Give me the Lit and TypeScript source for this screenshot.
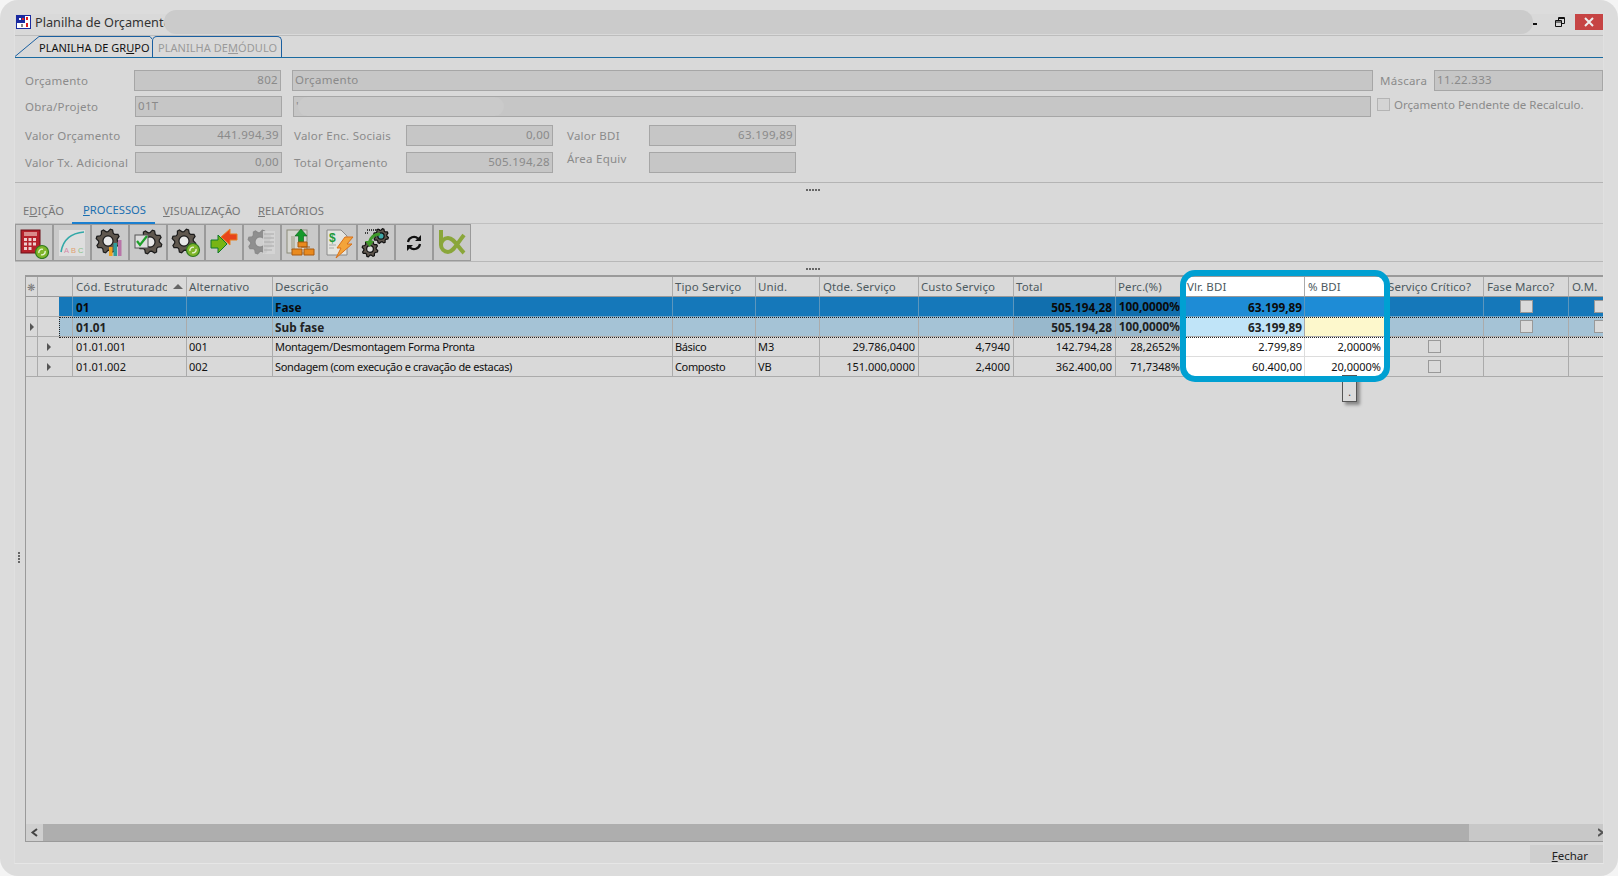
import { LitElement, html, css, svg } from "lit";
import { customElement } from "lit/decorators.js";

const gear = (cx: number, cy: number, r: number, fill = "#5f574e", stroke = "#1a1a1a", hole = "#e8e8e8") => {
  const pts: string[] = [];
  const teeth = 8;
  for (let i = 0; i < teeth * 4; i++) {
    const a = (i / (teeth * 4)) * Math.PI * 2 + 0.2;
    const rad = i % 4 < 2 ? r : r * 0.78;
    pts.push(`${(cx + Math.cos(a) * rad).toFixed(1)},${(cy + Math.sin(a) * rad).toFixed(1)}`);
  }
  return svg`<polygon points=${pts.join(" ")} fill=${fill} stroke=${stroke} stroke-width="1.2"/><circle cx=${cx} cy=${cy} r=${r * 0.42} fill=${hole} stroke=${stroke} stroke-width="1.2"/>`;
};
const badge = (cx: number, cy: number) => svg`<circle cx=${cx} cy=${cy} r="6.5" fill="#7fb52a" stroke="#2f7a1e" stroke-width="1.2"/><path d=${`M${cx - 3} ${cy + 1}a3 3 0 0 1 4-3.6M${cx + 3} ${cy - 1}a3 3 0 0 1-4 3.6`} fill="none" stroke="#e9f5d5" stroke-width="1.4"/>`;

const icons = [
  svg`<rect x="3" y="3" width="19" height="23" fill="#b5212b" stroke="#6d1118"/><rect x="6" y="5" width="13" height="4" fill="#d98b8b"/><path d="M6 11h3v3H6zM10.500 11h3v3h-3zM15 11h3v3h-3zM6 15.500h3v3H6zM10.500 15.500h3v3h-3zM15 15.500h3v3h-3zM6 20h3v3H6zM10.500 20h3v3h-3z" fill="#eecfcf"/>${badge(24, 25)}`,
  svg`<rect x="3" y="3" width="26" height="26" fill="#dedede"/><path d="M5 25C7 13 15 6 28 5" fill="none" stroke="#32a8a8" stroke-width="1.6"/><text x="8" y="26" font-size="7.500" fill="#d58aa8" font-family="Liberation Sans">A</text><text x="15" y="26" font-size="7.500" fill="#e0a070" font-family="Liberation Sans">B</text><text x="22" y="26" font-size="7.500" fill="#88c088" font-family="Liberation Sans">C</text>`,
  svg`${gear(14, 14, 12)}<rect x="15" y="20" width="3.500" height="9" fill="#eda21f"/><rect x="19.500" y="16" width="3.500" height="13" fill="#2f9d9d"/><rect x="24" y="13" width="3.500" height="16" fill="#b874a8"/>`,
  svg`${gear(18, 15, 12)}<rect x="3" y="8" width="13" height="13" fill="#ddd" stroke="#555"/><path d="M5 14l3 4 7-9" fill="none" stroke="#1fa02a" stroke-width="2.200"/>`,
  svg`${gear(14, 14, 12)}${badge(23, 23)}`,
  svg`<path d="M3 13h7V8l9 9-9 9v-5H3z" fill="#78b414" stroke="#0f7a2a"/><path d="M29 6h-7V1l-9 8 9 8v-5h7z" transform="translate(0 1)" fill="#e8431a" stroke="#e88020"/>`,
  svg`${gear(14, 15, 12, "#8f8f8f", "#8a8a8a", "#cfcfcf")}<rect x="17" y="4" width="12" height="23" fill="#d6d6d6" opacity=".85"/><path d="M18 7h10M18 11h10M18 15h10M18 19h10M18 23h8" stroke="#aaa"/>`,
  svg`<rect x="3" y="3" width="20" height="23" fill="#d6d6d0" stroke="#8a8a78"/><path d="M7 9h4v14H7z" fill="#b8b8a8"/><path d="M17 2l6 7h-3.500v6h-5V9H11z" fill="#169a2a" stroke="#0a5a1a" stroke-width=".6"/><path d="M14 20h9v-5h-9zM8 28h10v-6H8zM20 28h10v-6H20zM17 20h9" fill="#e98a1e" stroke="#a85a10"/>`,
  svg`<path d="M5 3h14l6 6v19H5z" fill="#e4e4e0" stroke="#8a8a8a"/><text x="7" y="15" font-size="12" font-weight="700" fill="#1f9a3a" font-family="Liberation Sans">$</text><path d="M7 18h7M7 21h5" stroke="#aaa"/><path d="M23 10h8l-6 7h5L14 31l5-10h-4z" fill="#f4a43a" stroke="#d8701a"/>`,
  svg`<path d="M7 3h18M5 6h3" stroke="#111" stroke-dasharray="1 1" stroke-width="1.500"/>${gear(21, 9, 7.500, "#5f574e", "#111", "#3fa8a8")}${gear(10, 22, 8, "#5f574e", "#111", "#ddd")}<path d="M9 16C11 9 15 7 20 7" fill="none" stroke="#3f9a2a" stroke-width="3"/><path d="M5 14h9l-4.500 6z" fill="#3f9a2a"/>`,
  svg`<path d="M10 15a6 6 0 0 1 10-3.500M22 17a6 6 0 0 1-10 3.500" fill="none" stroke="#111" stroke-width="2.200"/><path d="M23 8v6h-6zM9 24v-6h6z" fill="#111"/>`,
  svg`<path d="M5 3v15a7 7 0 0 0 7 7c5 0 8-7 16-17M5 18a7 7 0 0 1 7-7c6 0 9 8 16 15" fill="none" stroke="#8aa63a" stroke-width="4"/>`,
];

const cols = ["mark", "ind", "cod", "alt", "desc", "tipo", "unid", "qtde", "custo", "total", "perc", "vlr", "pct", "crit", "fase", "om"];
const heads: Record<string, string> = {
  cod: "Cód. Estruturado", alt: "Alternativo", desc: "Descrição", tipo: "Tipo Serviço", unid: "Unid.", qtde: "Qtde. Serviço",
  custo: "Custo Serviço", total: "Total", perc: "Perc.(%)", vlr: "Vlr. BDI", pct: "% BDI", crit: "Serviço Crítico?", fase: "Fase Marco?", om: "O.M.",
};
const right = new Set(["qtde", "custo", "total", "perc", "vlr", "pct"]);
type Row = { kind: string; values: Record<string, string> };
const rows: Row[] = [
  { kind: "phase", values: { cod: "01", desc: "Fase", total: "505.194,28", perc: "100,0000%", vlr: "63.199,89", fase: "x", om: "x" } },
  { kind: "sub", values: { mark: ">", cod: "01.01", desc: "Sub fase", total: "505.194,28", perc: "100,0000%", vlr: "63.199,89", fase: "x", om: "x" } },
  { kind: "item", values: { ind: ">", cod: "01.01.001", alt: "001", desc: "Montagem/Desmontagem Forma Pronta", tipo: "Básico", unid: "M3", qtde: "29.786,0400", custo: "4,7940", total: "142.794,28", perc: "28,2652%", vlr: "2.799,89", pct: "2,0000%", crit: "x" } },
  { kind: "item", values: { ind: ">", cod: "01.01.002", alt: "002", desc: "Sondagem (com execução e cravação de estacas)", tipo: "Composto", unid: "VB", qtde: "151.000,0000", custo: "2,4000", total: "362.400,00", perc: "71,7348%", vlr: "60.400,00", pct: "20,0000%", crit: "x" } },
];

@customElement("app-root")
export class AppRoot extends LitElement {
  static styles = css`
    :host { display: block; width: 1618px; height: 876px; background: #f4f4f4; font-family: "Noto Sans", sans-serif; overflow: hidden; }
    * { box-sizing: border-box; }
    .frame { position: relative; width: 1618px; height: 876px; background: #dcdcdc; border-radius: 18px; padding: 14px 12px 12px 15px; }
    .win { width: 1590px; height: 850px; background: #d9d9d9; border-left: 1px solid #e0e0e0; border-right: 1px solid #e0e0e0; border-bottom: 1px solid #e6e6e6; display: flex; flex-direction: column; margin-left: -1px; }
    .title { height: 22px; border-bottom: 1px solid #bdbdbd; display: flex; align-items: center; padding-left: 1px; flex: none; position: relative; }
    .title .ti { width: 15px; height: 14px; margin: 0 4px 5px 0; flex: none; }
    .title span { font-size: 12.700px; color: #333; margin-bottom: 5px; }
    .ctrls { margin-left: auto; display: flex; align-items: flex-start; height: 21px; }
    .ctrls svg { display: block; }
    .close { width: 28px; height: 16px; background: #c64444; display: flex; align-items: center; justify-content: center; }
    .pill { position: absolute; left: 149px; top: -4px; width: 1369px; height: 24px; border-radius: 12px; background: #cbcbcb; }
    .tabs { height: 22px; border-bottom: 1px solid #1a6aa0; display: flex; flex: none; }
    .tab { position: relative; height: 21px; font-size: 11px; display: flex; align-items: center; white-space: nowrap; padding-top: 1px; }
    .tab svg { position: absolute; left: 0; top: 0; }
    .t1 { width: 137px; padding-left: 24px; color: #111; }
    .t2 { width: 130px; padding-left: 5px; color: #9a9a9a; border: 1px solid #1a5fa0; border-bottom: none; border-radius: 5px 5px 0 0; letter-spacing: .05px; }
    .form { flex: none; height: 125px; padding: 12px 0 0 10px; border-bottom: 1px solid #b4b4b4; display: flex; flex-direction: column; }
    .row { display: flex; height: 21px; align-items: center; flex: none; }
    .r1 { margin-bottom: 5px; }
    .r2 { margin-bottom: 8px; }
    .r3 { margin-bottom: 6px; }
    .lab { font-size: 11.500px; color: #8b8b8b; white-space: nowrap; flex: none; letter-spacing: .25px; padding-bottom: 1px; }
    .row:last-child .lab { padding-bottom: 0; }
    .row:last-child .lab.up { padding-bottom: 9px; }
    .lab.plain { letter-spacing: 0; padding-bottom: 4px; }
    .f { height: 21px; background: #c6c6c6; border: 1px solid #a6a6a6; font-size: 11.500px; color: #8a8a8a; padding: 0 2px 2px; display: flex; align-items: center; white-space: nowrap; flex: none; position: relative; letter-spacing: .3px; }
    .f.num { justify-content: flex-end; }
    .w147 { width: 147px; }
    .cb { width: 13px; height: 13px; border: 1px solid #b4b4b4; background: #d4d4d4; flex: none; margin: 0 0 4px 6px; }
    .blur { position: absolute; left: 4px; top: 0; width: 206px; height: 19px; background: #cacaca; border-radius: 10px; }
    .split { height: 13px; flex: none; display: flex; justify-content: center; align-items: center; font-size: 0; }
    .dots { display: flex; gap: 1px; margin-left: 7px; }
    .dots i { width: 2px; height: 2px; background: #666; }
    .ptabs { height: 28px; flex: none; display: flex; border-bottom: 1px solid #c0c0c0; }
    .pt { font-size: 11.200px; color: #777; display: flex; align-items: center; white-space: nowrap; padding-top: 1px; }
    .pt.on { color: #1a6fb0; border-bottom: 2px solid #1a7fd0; padding: 0 0 0 11px; width: 83px; margin: 0 8px 0 -3px; height: 28px; }
    .tb { display: flex; height: 38px; flex: none; border-bottom: 1px solid #b8b8b8; }
    .btn { width: 38px; height: 37px; background: #c9c9c9; border: 1px solid #9a9a9a; display: flex; align-items: center; justify-content: center; }
    .gridbox { flex: none; height: 567px; margin-left: 10px; border-left: 1px solid #9a9a9a; border-top: 2px solid #9a9a9a; border-bottom: 1px solid #9a9a9a; display: flex; flex-direction: column; overflow: hidden; position: relative; }
    .tw { flex: 1; overflow: hidden; position: relative; }
    .grid { display: grid; grid-template-columns: 12px 35px 114px 86px 400px 83px 64px 99px 95px 102px 68px 121px 80px 99px 85px 64px; grid-auto-rows: 20px; width: 1607px; font-size: 11px; color: #111; }
    .c { border-right: 1px solid #ababab; border-bottom: 1px solid #ababab; padding: 0 3px; display: flex; align-items: center; white-space: nowrap; overflow: hidden; position: relative; }
    .c.right { justify-content: flex-end; }
    .c.h { color: #4d5a60; font-size: 11.500px; letter-spacing: .1px; border-bottom-color: #9a9a9a; }
    .c.h.total, .c.h.perc, .c.h.custo { padding-left: 2px; }
    .c.h.vlr, .c.h.pct { background: #fff; }
    .c.phase, .c.sub { font-size: 11.800px; font-weight: 700; }
    .c.vlr { padding-right: 2px; }
    .c.phase { background: #1578ba; border-bottom-color: #6aa0c4; border-right-color: #5c96bd; color: #0a0a0a; }
    .c.phase.total, .c.phase.perc { background: #116fae; }
    .c.phase.vlr, .c.phase.pct { background: #1e8cd6; }
    .c.sub { background: #a5c3d6; color: #222; }
    .c.sub.total, .c.sub.perc { background: #98b8cc; }
    .c.sub.vlr { background: #c0e4f8; }
    .c.sub.pct { background: #fdf8cc; }
    .c.item.vlr, .c.item.pct { background: #fff; border-color: #ddd; }
    .c.mark.phase, .c.mark.sub { background: #d9d9d9; border-bottom-color: #ababab; border-right-color: #ababab; }
    .c.ind.phase { background: linear-gradient(to right, #d9d9d9 21px, #1578ba 21px); border-bottom-color: #ababab; }
    .c.ind.sub { background: linear-gradient(to right, #d9d9d9 21px, #a5c3d6 21px); }
    .c.mark { padding: 0; justify-content: center; }
    .c.ind { padding: 0 0 0 9px; }
    .c.perc.phase, .c.perc.sub { padding-bottom: 2px; padding-left: 0; }
    .c.desc, .c.tipo, .c.unid, .c.alt { padding-left: 2px; }
    .c.item.desc, .c.item.tipo { letter-spacing: -.35px; }
    .arrow { width: 0; height: 0; border-left: 4px solid #555; border-top: 4px solid transparent; border-bottom: 4px solid transparent; }
    .ck { width: 13px; height: 13px; border: 1px solid #999; background: #dadada; margin: 0 auto; flex: none; }
    .clip { overflow: hidden; width: 91px; flex: none; }
    .sort { margin-left: 6px; width: 0; height: 0; border-left: 5px solid transparent; border-right: 5px solid transparent; border-bottom: 5px solid #666; flex: none; }
    .star { color: #777; font-size: 10px; }
    .focus { position: absolute; left: 33px; top: 40px; width: 1600px; height: 21px; border-top: 1px dotted #222; border-bottom: 1px dotted #222; border-left: 1px dotted #222; pointer-events: none; }
    .sb { height: 17px; display: flex; flex: none; background: #c8c8c8; }
    .sb .a { width: 17px; display: flex; align-items: center; justify-content: center; background: #cfcfcf; }
    .sb .th { width: 1426px; background: #aeaeae; }
    .sb .e { margin-left: auto; width: 5px; display: flex; align-items: center; overflow: hidden; }
    .foot { flex: 1; display: flex; justify-content: flex-end; align-items: flex-end; }
    .fechar { width: 73px; height: 18px; background: #cfcfcf; font-size: 11.500px; color: #222; display: flex; align-items: center; justify-content: flex-end; padding: 2px 15px 0 0; }
    .hl { position: absolute; left: 1180px; top: 270px; width: 210px; height: 112px; border: 6px solid #00a0d2; border-radius: 15px; pointer-events: none; }
    .tip { position: absolute; left: 1342px; top: 375px; width: 15px; height: 27px; background: #dcdcdc; border: 1px solid #555; box-shadow: 3px 3px 3px #888; font-size: 10px; color: #333; display: flex; align-items: center; justify-content: center; padding-top: 6px; }
    .vdots { position: absolute; left: 18px; top: 552px; display: flex; flex-direction: column; gap: 1px; }
    .vdots i { width: 2px; height: 2px; background: #666; }
  `;

  private dots() {
    return html`<div class="dots"><i></i><i></i><i></i><i></i><i></i></div>`;
  }

  private cell(col: string, r: Row) {
    const v = r.values[col] ?? "";
    const cls = ["c", col, r.kind, right.has(col) ? "right" : ""].join(" ");
    if (v === ">") return html`<div class=${cls}><span class="arrow"></span></div>`;
    if (v === "x") return html`<div class=${cls}><span class="ck"></span></div>`;
    return html`<div class=${cls}>${v}</div>`;
  }

  render() {
    return html`<div class="frame">
      <div class="win">
        <div class="title">
          <svg class="ti" viewBox="0 0 15 14"><rect width="15" height="14" fill="#1a2aa0"/><rect x="1" y="1" width="13" height="12" fill="#fff"/><rect x="1" y="1" width="8" height="7" fill="#1a2aa0"/><rect x="3" y="3" width="2" height="2" fill="#fff"/><rect x="6" y="3" width="2" height="2" fill="#e02020"/><rect x="10" y="2" width="2" height="3" fill="#e02020"/><rect x="10" y="8" width="2" height="4" fill="#e02020"/><rect x="5" y="9" width="2" height="3" fill="#888"/></svg>
          <span>Planilha de Orçamento</span>
          <div class="pill"></div>
          <div class="ctrls">
            <svg width="17" height="17" viewBox="0 0 17 17"><rect x="0" y="9" width="4" height="2" fill="#111"/></svg>
            <svg width="25" height="17" viewBox="0 0 25 17"><path d="M5.500 6.500h6v6h-6zM8.500 6.500v-3h6v6h-3M5.500 8h6M8.500 4.500h6" fill="none" stroke="#111"/></svg>
            <div class="close"><svg width="10" height="10" viewBox="0 0 10 10"><path d="M1 1l8 8M9 1l-8 8" stroke="#eee" stroke-width="2"/></svg></div>
          </div>
        </div>
        <div class="tabs">
          <div class="tab t1"><svg width="137" height="21" viewBox="0 0 137 21"><path d="M0 20.500L24 .5H135L137 3" fill="none" stroke="#1a5fa0"/></svg>PLANILHA DE GR<u>U</u>PO</div>
          <div class="tab t2">PLANILHA DE <u>M</u>ÓDULO</div>
        </div>
        <div class="form">
          <div class="row r1">
            <span class="lab" style="width:109px">Orçamento</span><div class="f num w147">802</div>
            <div class="f" style="width:1081px;margin-left:11px">Orçamento</div>
            <span class="lab" style="width:54px;margin-left:7px">Máscara</span><div class="f" style="width:169px">11.22.333</div>
          </div>
          <div class="row r2">
            <span class="lab" style="width:110px">Obra/Projeto</span><div class="f w147">01T</div>
            <div class="f" style="width:1078px;margin-left:11px">'<div class="blur"></div></div>
            <span class="cb"></span><span class="lab plain" style="margin-left:4px">Orçamento Pendente de Recalculo.</span>
          </div>
          <div class="row r3">
            <span class="lab" style="width:110px">Valor Orçamento</span><div class="f num w147">441.994,39</div>
            <span class="lab" style="width:112px;margin-left:12px">Valor Enc. Sociais</span><div class="f num w147">0,00</div>
            <span class="lab" style="width:82px;margin-left:14px">Valor BDI</span><div class="f num w147">63.199,89</div>
          </div>
          <div class="row">
            <span class="lab" style="width:110px">Valor Tx. Adicional</span><div class="f num w147">0,00</div>
            <span class="lab" style="width:112px;margin-left:12px">Total Orçamento</span><div class="f num w147">505.194,28</div>
            <span class="lab up" style="width:82px;margin-left:14px">Área Equiv</span><div class="f w147"></div>
          </div>
        </div>
        <div class="split">${this.dots()}</div>
        <div class="ptabs">
          <span class="pt" style="width:60px;padding-left:8px">E<u>D</u>IÇÃO</span>
          <span class="pt on"><u>P</u>ROCESSOS</span>
          <span class="pt" style="width:95px"><u>V</u>ISUALIZAÇÃO</span>
          <span class="pt"><u>R</u>ELATÓRIOS</span>
        </div>
        <div class="tb">${icons.map((i) => html`<div class="btn"><svg width="32" height="32" viewBox="0 0 32 32">${i}</svg></div>`)}</div>
        <div class="split">${this.dots()}</div>
        <div class="gridbox">
          <div class="tw">
            <div class="grid">
              ${cols.map((c) => {
                const cls = `c h ${c}`;
                if (c === "mark") return html`<div class=${cls}><span class="star">❋</span></div>`;
                if (c === "cod") return html`<div class=${cls}><span class="clip">${heads[c]}</span><span class="sort"></span></div>`;
                return html`<div class=${cls}>${heads[c] ?? ""}</div>`;
              })}
              ${rows.map((r) => cols.map((c) => this.cell(c, r)))}
            </div>
            <div class="focus"></div>
          </div>
          <div class="sb">
            <div class="a"><svg width="9" height="9" viewBox="0 0 9 9"><path d="M7 1L2.500 4.500 7 8" fill="none" stroke="#444" stroke-width="2"/></svg></div>
            <div class="th"></div>
            <div class="e"><svg width="9" height="9" viewBox="0 0 9 9" style="flex:none"><path d="M0 1l4.500 3.500L0 8" fill="none" stroke="#555" stroke-width="2"/></svg></div>
          </div>
        </div>
        <div class="foot"><div class="fechar"><span><u>F</u>echar</span></div></div>
      </div>
      <div class="tip">.</div>
      <div class="hl"></div>
      <div class="vdots"><i></i><i></i><i></i><i></i></div>
    </div>`;
  }
}
